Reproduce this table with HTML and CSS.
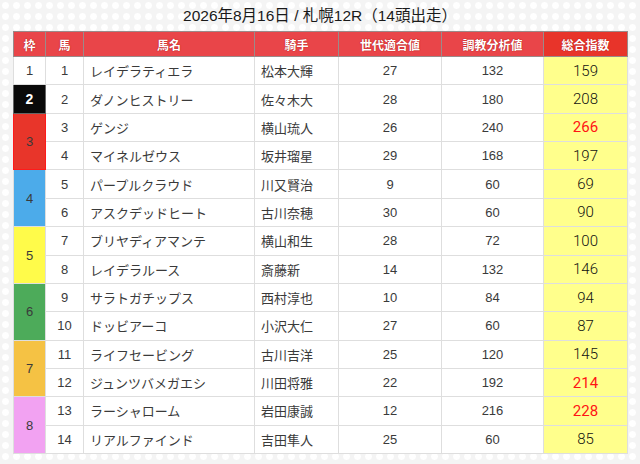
FILE: index.html
```html
<!DOCTYPE html>
<html lang="ja">
<head>
<meta charset="utf-8">
<link rel="stylesheet" href="styles.css">
</head>
<body>
<div class="page">
  <h1 class="title">2026年8月16日 / 札幌12R（14頭出走）</h1>
  <table class="race">
    <colgroup>
      <col class="c-waku"><col class="c-uma"><col class="c-name"><col class="c-jockey"><col class="c-gen"><col class="c-train"><col class="c-total">
    </colgroup>
    <thead>
      <tr><th>枠</th><th>馬</th><th>馬名</th><th>騎手</th><th>世代適合値</th><th>調教分析値</th><th class="th-total">総合指数</th></tr>
    </thead>
    <tbody>
      <tr><td class="waku w1">1</td><td class="num">1</td><td class="name">レイデラティエラ</td><td class="name">松本大輝</td><td class="num">27</td><td class="num">132</td><td class="total">159</td></tr>
      <tr><td class="waku w2">2</td><td class="num">2</td><td class="name">ダノンヒストリー</td><td class="name">佐々木大</td><td class="num">28</td><td class="num">180</td><td class="total">208</td></tr>
      <tr><td class="waku w3" rowspan="2">3</td><td class="num">3</td><td class="name">ゲンジ</td><td class="name">横山琉人</td><td class="num">26</td><td class="num">240</td><td class="total hot">266</td></tr>
      <tr><td class="num">4</td><td class="name">マイネルゼウス</td><td class="name">坂井瑠星</td><td class="num">29</td><td class="num">168</td><td class="total">197</td></tr>
      <tr><td class="waku w4" rowspan="2">4</td><td class="num">5</td><td class="name">パープルクラウド</td><td class="name">川又賢治</td><td class="num">9</td><td class="num">60</td><td class="total">69</td></tr>
      <tr><td class="num">6</td><td class="name">アスクデッドヒート</td><td class="name">古川奈穂</td><td class="num">30</td><td class="num">60</td><td class="total">90</td></tr>
      <tr><td class="waku w5" rowspan="2">5</td><td class="num">7</td><td class="name">ブリヤディアマンテ</td><td class="name">横山和生</td><td class="num">28</td><td class="num">72</td><td class="total">100</td></tr>
      <tr><td class="num">8</td><td class="name">レイデラルース</td><td class="name">斎藤新</td><td class="num">14</td><td class="num">132</td><td class="total">146</td></tr>
      <tr><td class="waku w6" rowspan="2">6</td><td class="num">9</td><td class="name">サラトガチップス</td><td class="name">西村淳也</td><td class="num">10</td><td class="num">84</td><td class="total">94</td></tr>
      <tr><td class="num">10</td><td class="name">ドッビアーコ</td><td class="name">小沢大仁</td><td class="num">27</td><td class="num">60</td><td class="total">87</td></tr>
      <tr><td class="waku w7" rowspan="2">7</td><td class="num">11</td><td class="name">ライフセービング</td><td class="name">古川吉洋</td><td class="num">25</td><td class="num">120</td><td class="total">145</td></tr>
      <tr><td class="num">12</td><td class="name">ジュンツバメガエシ</td><td class="name">川田将雅</td><td class="num">22</td><td class="num">192</td><td class="total hot">214</td></tr>
      <tr><td class="waku w8" rowspan="2">8</td><td class="num">13</td><td class="name">ラーシャローム</td><td class="name">岩田康誠</td><td class="num">12</td><td class="num">216</td><td class="total hot">228</td></tr>
      <tr><td class="num">14</td><td class="name">リアルファインド</td><td class="name">吉田隼人</td><td class="num">25</td><td class="num">60</td><td class="total">85</td></tr>
    </tbody>
  </table>
</div>
</body>
</html>
```

FILE: styles.css
```css
html, body {
  margin: 0;
  padding: 0;
}
body {
  width: 640px;
  height: 464px;
  overflow: hidden;
  background-color: #f4f4f4;
  background-image: radial-gradient(circle at 50% 50%, #ffffff 0, #ffffff 3px, rgba(255,255,255,0) 4px);
  background-size: 11px 11px;
  font-family: "Liberation Sans", "Noto Sans CJK JP", sans-serif;
  color: #333;
}
.page {
  padding: 6px 13px 0 13px;
}
.title {
  margin: 0 0 5px 0;
  height: 20px;
  line-height: 20px;
  font-size: 15.5px;
  font-weight: normal;
  color: #1a1a1a;
  text-align: center;
}
.race {
  width: 614px;
  border-collapse: collapse;
  table-layout: fixed;
  background: #fff;
}
.c-waku { width: 32px; }
.c-uma { width: 38px; }
.c-name { width: 171px; }
.c-jockey { width: 84px; }
.c-gen { width: 103px; }
.c-train { width: 102px; }
.c-total { width: 84px; }

.race th {
  height: 24px;
  padding: 0;
  background: #e94549;
  color: #fff;
  font-size: 12px;
  font-weight: bold;
  border: 1px solid #9a8a8a;
  text-shadow: 0 0 1px #b31a1a, 0 0 1px #b31a1a;
  text-align: center;
}
.race th.th-total {
  background: #e8342a;
}
.race td {
  height: 27.36px;
  padding: 0;
  border: 1px solid #dedede;
  font-size: 13px;
  color: #3a3a3a;
}
.num, .waku {
  text-align: center;
}
.name {
  padding-left: 6px !important;
  text-align: left;
}
.total {
  background: #ffff8c;
  text-align: center;
  font-family: Roboto, "Liberation Sans", sans-serif;
  font-size: 15px !important;
  font-weight: 300;
  color: #111 !important;
}
.total.hot {
  font-weight: 400;
  color: #ff1414 !important;
}
.w1 { background: #fff; }
.w2 { background: #0a0a0a; color: #fff !important; font-weight: bold; border-color: #666 !important; font-size: 14px !important; }
.w3 { background: #e8352a; border: 1px solid #ff1a1a !important; }
.w4 { background: #4cabea; }
.w5 { background: #fffb4a; }
.w6 { background: #4dab5a; }
.w7 { background: #f5c244; }
.w8 { background: #f2a2f2; }
```
